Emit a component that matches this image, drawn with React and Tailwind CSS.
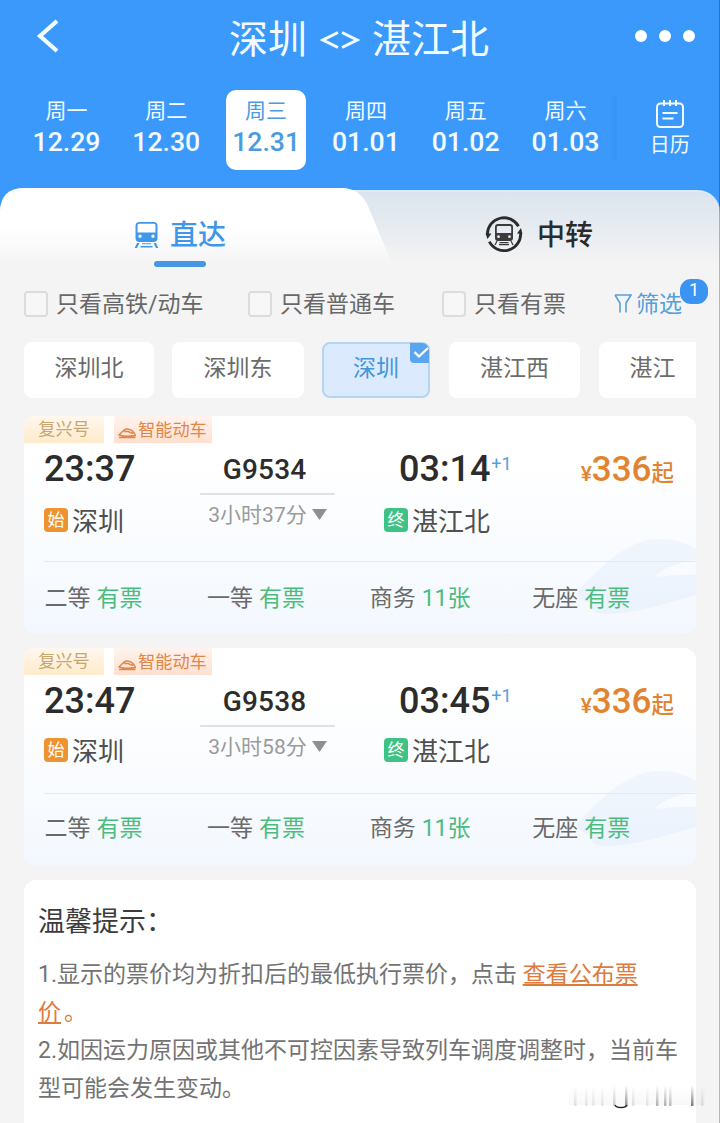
import React from 'react'

const days = [
  { week: '周一', date: '12.29' },
  { week: '周二', date: '12.30' },
  { week: '周三', date: '12.31', active: true },
  { week: '周四', date: '01.01' },
  { week: '周五', date: '01.02' },
  { week: '周六', date: '01.03' }
]

const stations = [
  { name: '深圳北', width: 'w-[130px]' },
  { name: '深圳东', width: 'w-[132px] ml-[18px]' },
  { name: '深圳', width: 'w-[108px] ml-[18px]', active: true },
  { name: '湛江西', width: 'w-[131px] ml-[19px]' },
  { name: '湛江', width: 'w-[107px] ml-[19px]' }
]

const trains = [
  { no: 'G9534', depart: '23:37', arrive: '03:14', duration: '3小时37分', stopHeight: 'h-[52px]', seatPad: 'pt-[19px]' },
  { no: 'G9538', depart: '23:47', arrive: '03:45', duration: '3小时58分', stopHeight: 'h-[48px]', seatPad: 'pt-[17px]' }
]

const seats = [
  { name: '二等', left: '有票' },
  { name: '一等', left: '有票' },
  { name: '商务', left: '11张' },
  { name: '无座', left: '有票' }
]

function TrainIcon({ className }) {
  return (
    <svg viewBox="0 0 24 28" className={className} fill="currentColor">
      <path
        fillRule="evenodd"
        d="M5 1h14a4 4 0 0 1 4 4v12a4 4 0 0 1-4 4H5a4 4 0 0 1-4-4V5a4 4 0 0 1 4-4zm-.5 1.800a1.500 1.500 0 0 0-1.500 1.500v7.200h18V4.300a1.500 1.500 0 0 0-1.500-1.500zM5.500 13.500a1.700 1.700 0 1 0 0 3.400 1.700 1.700 0 0 0 0-3.400zm13 0a1.700 1.700 0 1 0 0 3.400 1.700 1.700 0 0 0 0-3.400z"
      />
      <path d="M2.500 22H5l-2.500 5H.2zM21.500 22H19l2.500 5h2.300zM7.500 22.300h9v1h-9zM6 25h12v1.500H6z" />
    </svg>
  )
}

function TransferIcon() {
  return (
    <svg viewBox="0 0 38 38" className="w-[38px] h-[38px]" fill="none">
      <path d="M2.400 19A16.600 16.600 0 0 1 33.500 11.300" stroke="#2b2b2b" strokeWidth="2.800" />
      <path d="M35.600 18A16.600 16.600 0 0 1 4.300 26.700" stroke="#2b2b2b" strokeWidth="2.800" />
      <path d="M.5 18.500h6L2.500 24zM37.500 19l-5.500-.5 4-5.500z" fill="#2b2b2b" />
      <path
        fillRule="evenodd"
        d="M13 9h12a3 3 0 0 1 3 3v11a3 3 0 0 1-3 3H13a3 3 0 0 1-3-3V12a3 3 0 0 1 3-3zm0 2a1.200 1.200 0 0 0-1.200 1.200V18h14.400v-5.800A1.200 1.200 0 0 0 25 11zm.5 9.300a1.400 1.400 0 1 0 0 2.800 1.400 1.400 0 0 0 0-2.800zm11 0a1.400 1.400 0 1 0 0 2.800 1.400 1.400 0 0 0 0-2.800z"
        fill="#3a3a3a"
      />
      <path d="M12 26l-2 4M26 26l2 4M14.500 27.600h9M14 29.600h10" stroke="#3a3a3a" strokeWidth="1.200" />
    </svg>
  )
}

function Header() {
  return (
    <div className="h-[190px] bg-[#3b99fc] text-[#f3fdff]">
      <div className="h-[78px] flex items-center justify-between pl-[36px] pr-[25px]">
        <svg viewBox="0 0 24 34" className="w-6 h-[34px] mt-[-6px]" fill="none">
          <path d="M21 2L4 17l17 15" stroke="currentColor" strokeWidth="4.200" />
        </svg>
        <div className="w-[260px] ml-[23px] text-[39px] leading-[48px] mt-[2px] whitespace-nowrap flex justify-between">
          <span>深圳</span>
          <svg viewBox="0 0 40 20" className="w-10 h-5 mt-[14px]" fill="none" stroke="currentColor" strokeWidth="3">
            <path d="M18 2.500L3 10l15 7.500M22 2.500L37 10l-15 7.500" />
          </svg>
          <span>湛江北</span>
        </div>
        <div className="flex gap-3 mt-[-6px]">
          <span className="w-3 h-3 rounded-full bg-white" />
          <span className="w-3 h-3 rounded-full bg-white" />
          <span className="w-3 h-3 rounded-full bg-white" />
        </div>
      </div>
      <div className="flex pl-[26px] pt-3">
        {days.map((day) => (
          <div
            key={day.date}
            className={`w-20 h-20 mr-[19.800px] shrink-0 rounded-[10px] text-center pt-[7px] pl-px ${day.active ? 'bg-white text-[#4a9be0]' : ''}`}
          >
            <p className="text-[21px] leading-[28px]">{day.week}</p>
            <p className="text-[26.600px] leading-[34px] font-medium">{day.date}</p>
          </div>
        ))}
        <div className="flex-1 h-16 mt-[6px] bg-gradient-to-r from-[#3b99fc] via-[#3793f6] via-[5%] to-[#3b99fc] to-[6%] -ml-[15px]">
          <div className="w-[120px] pt-[3px] flex flex-col items-center">
            <svg viewBox="0 0 30 30" className="w-[30px] h-[30px]" fill="none" stroke="currentColor" strokeWidth="2">
              <rect x="2" y="4.500" width="26" height="23.500" rx="3.500" />
              <path d="M9 1v6M15 1v6M21 1v6M7.500 14h15M7.500 19.500h11" />
            </svg>
            <p className="text-[20px] leading-[32px]">日历</p>
          </div>
        </div>
      </div>
    </div>
  )
}

function Tabs() {
  return (
    <div className="relative h-[78px] -mt-[2px] bg-[#3b99fc]">
      <div className="absolute inset-x-0 top-[2px] bottom-0 rounded-t-[22px] border-t-2 border-[#d8edff] bg-gradient-to-b from-[#dbe4ee] to-[#f4f4f4]" />
      <svg viewBox="0 0 400 78" className="absolute left-0 top-0 w-[400px] h-[78px]">
        <defs>
          <linearGradient id="tab" x1="0" y1="0" x2="0" y2="1">
            <stop offset="0.5" stopColor="#ffffff" />
            <stop offset="1" stopColor="#f4f4f4" />
          </linearGradient>
        </defs>
        <path d="M0 78V23Q1 0 24 0H342Q360 0 368 18L393 78Z" fill="url(#tab)" />
      </svg>
      <div className="relative flex h-full">
        <div className="w-[360px] flex justify-center">
          <div className="flex h-[92px] items-center gap-[11px] text-[28px] font-medium text-[#3f97ea]">
            <TrainIcon className="w-[25px] h-7 mt-[2px]" />
            <span className="mt-[3px]">直达</span>
          </div>
        </div>
        <div className="w-[360px] flex justify-center">
          <div className="flex h-[92px] items-center gap-[14px] text-[28px] font-medium text-[#2b2b2b] -ml-[2px]">
            <TransferIcon />
            <span className="mt-[3px]">中转</span>
          </div>
        </div>
      </div>
      <span className="absolute left-[154px] top-[73px] w-[52px] h-[6px] rounded-sm bg-[#4596e6]" />
    </div>
  )
}

function CheckItem({ label, className }) {
  return (
    <div className={`flex items-center gap-2 ${className}`}>
      <span className="w-6 h-[26px] rounded-[4px] border-2 border-[#dcdcdc] bg-[#f7f7f7]" />
      <span className="mt-[2px]">{label}</span>
    </div>
  )
}

function Filters() {
  return (
    <div className="h-[76px] flex items-center pl-6 text-[23px] text-[#686868] whitespace-nowrap">
      <CheckItem label="只看高铁/动车" className="w-[224px]" />
      <CheckItem label="只看普通车" className="w-[194px]" />
      <CheckItem label="只看有票" className="w-[172px]" />
      <div className="relative flex items-center gap-[4px] text-[#559fdc]">
        <svg viewBox="0 0 18 20" className="w-[18px] h-5" fill="none" stroke="currentColor" strokeWidth="1.600">
          <path d="M1 1h16l-5 8v9.500M1 1l5 8v9.500" />
        </svg>
        <span className="mt-[2px]">筛选</span>
        <span className="absolute left-[66px] top-[-7px] w-7 h-[25px] rounded-[11px] bg-[#3b93f2] text-white text-[18px] leading-[22px] text-center">
          1
        </span>
      </div>
    </div>
  )
}

function StationChips() {
  return (
    <div className="mx-6 flex overflow-hidden text-[23px] text-[#6b6b6b]">
      {stations.map((station) => (
        <div
          key={station.name}
          className={`relative shrink-0 h-[56px] rounded-lg flex items-center justify-center pb-[2px] ${station.width} ${station.active ? 'bg-[#dbebfd] border-2 border-[#b5d3f3] text-[#4496dc]' : 'bg-white'}`}
        >
          {station.name}
          {station.active && (
            <span className="absolute right-[-1px] top-[-1px] w-[19px] h-5 rounded-tr-[7px] rounded-bl-[4px] bg-[#5ba5f0]">
              <svg viewBox="0 0 19 20" className="w-[19px] h-5" fill="none">
                <path d="M4.500 9l4.500 4.500 9-8.500" stroke="#fff" strokeWidth="2.200" />
              </svg>
            </span>
          )}
        </div>
      ))}
    </div>
  )
}

function TrainCard({ train }) {
  return (
    <div className="relative h-[218px] rounded-xl overflow-hidden bg-gradient-to-b from-white from-[20%] to-[#f3f8fe]">
      {/* bullet train watermark */}
      <svg viewBox="0 0 120 84" className="absolute right-0 top-[119px] w-[120px] h-[84px]">
        <defs>
          <linearGradient id="train" x1="0" y1="0" x2="0" y2="1">
            <stop offset="0" stopColor="#f1f6fd" />
            <stop offset="1" stopColor="#eaf2fc" />
          </linearGradient>
        </defs>
        <path
          d="M2 56C30 26 54 4 84 4c14 0 27 4 36 10v11c-18 2-34 9-42 17 14-1 28-3 42-2v20C92 68 60 78 32 79c-14 0-18-4-15-10-10-3-18-7-15-13z"
          fill="url(#train)"
        />
      </svg>
      <div className="relative">
        <div className="flex gap-[10px] h-[27px] text-[17.200px] leading-[27px]">
          <span className="w-20 text-center bg-gradient-to-b from-[#fff7ee] to-[#ffebcb] text-[#c8a66c]">复兴号</span>
          <span className="w-[98px] flex items-center pl-[4px] gap-[2px] bg-gradient-to-b from-[#fff3ee] to-[#ffe0d0] text-[#e08748]">
            <svg viewBox="0 0 18 12" className="w-[18px] h-3 mt-[7px] shrink-0" fill="none" stroke="currentColor" strokeWidth="1.400">
              <path d="M1 8C4 5 6 2 9 2c4 0 7 3 8.500 6.500-6 1-12 1-16.500-.5zM6 4.500h4l5 2M1 10.500h16.500" />
            </svg>
            <span className="mt-[2px]">智能动车</span>
          </span>
        </div>
        <div className="flex h-[53px] pl-5 text-[#2c2c2c] font-medium whitespace-nowrap">
          <div className="w-[153px] text-[36px] leading-[53px]">{train.depart}</div>
          <div className="w-[135px] text-center text-[28px] leading-[54px] tracking-[0.200px]">{train.no}</div>
          <div className="flex w-[183px] pl-[67px]">
            <span className="text-[36px] leading-[53px]">{train.arrive}</span>
            <span className="text-[18px] leading-[42px] pl-px font-normal text-[#559fdc]">+1</span>
          </div>
          <div className="flex-1 text-right pr-[22px] text-[#e18431] leading-[54px]">
            <span className="text-[21px]">¥</span>
            <span className="text-[35px]">336</span>
            <span className="text-[22.500px]">起</span>
          </div>
        </div>
        <div className="flex h-[65px] pl-5 text-[26px] text-[#4f4f4f]">
          <div className={`flex items-center w-[156px] gap-1 ${train.stopHeight}`}>
            <span className="w-6 h-6 mt-[-4px] rounded-[4px] bg-[#ed9330] text-white text-[17px] leading-6 text-center">始</span>
            深圳
          </div>
          <div className="w-[135px] h-[40px] flex items-center justify-center gap-[5px] text-[21px] text-[#9a9a9a] relative">
            <span className="absolute left-0 right-0 top-[-3px] h-[2px] bg-[#dfe1e4] rounded" />
            {train.duration}
            <svg viewBox="0 0 15 11" className="w-[15px] h-[11px] mt-[-4px]">
              <path d="M0 0h15L7.500 11z" fill="#8f8f8f" />
            </svg>
          </div>
          <div className={`flex items-center pl-[49px] gap-1 ${train.stopHeight}`}>
            <span className="w-6 h-6 mt-[-4px] rounded-[4px] bg-[#3fc285] text-white text-[17px] leading-6 text-center">终</span>
            湛江北
          </div>
        </div>
        <div className="ml-5 border-t border-[#e4eaf1]" />
        <div className={`flex pl-[20.500px] text-[23px] leading-[36px] text-[#6a6a6a] whitespace-nowrap ${train.seatPad}`}>
          {seats.map((seat) => (
            <div key={seat.name} className="w-[162.600px] shrink-0 flex gap-[6px]">
              {seat.name}
              <span className="text-[#4cbc7e]">{seat.left}</span>
            </div>
          ))}
        </div>
      </div>
    </div>
  )
}

function Notice() {
  return (
    <div className="flex-1 rounded-t-xl bg-white px-[14px] pt-[22px]">
      <h3 className="text-[27px] leading-10 text-[#3c3c3c]">温馨提示：</h3>
      <div className="mt-[14px] text-[23px] leading-[38px] text-[#737373] whitespace-nowrap">
        <p>
          1.显示的票价均为折扣后的最低执行票价，点击{' '}
          <span className="text-[#de7b3d] underline underline-offset-[2px] decoration-2">查看公布票</span>
          <br />
          <span className="text-[#de7b3d] underline underline-offset-[2px] decoration-2">价</span>
          <span className="text-[#de7b3d] pl-[3px]">。</span>
        </p>
        <p>
          2.如因运力原因或其他不可控因素导致列车调度调整时，当前车
          <br />
          型可能会发生变动。
        </p>
      </div>
    </div>
  )
}

function FadedMark() {
  const bars = [
    [7, 0.14], [18, 0.12], [25, 0.1], [34, 0.12], [46, 0.25], [58, 0.6], [65, 0.15],
    [79, 0.12], [89, 0.4], [97, 0.4], [102, 0.35], [124, 0.7], [134, 0.12]
  ]
  return (
    <svg viewBox="0 0 140 26" className="absolute left-[567px] top-[1084px] w-[140px] h-[26px]">
      <defs>
        <linearGradient id="fade" x1="0" y1="0" x2="0" y2="1">
          <stop offset="0" stopColor="#555" stopOpacity="0" />
          <stop offset="1" stopColor="#444" />
        </linearGradient>
      </defs>
      <rect x="2" y="2" width="136" height="19" fill="url(#fade)" opacity="0.04" />
      {bars.map(([x, opacity]) => (
        <rect key={x} x={x} y="1" width="2.500" height="21" fill="url(#fade)" opacity={opacity} />
      ))}
      <path d="M48 21q1 2.500 6 2.500t6-2.500" fill="none" stroke="#222" strokeWidth="1.500" />
    </svg>
  )
}

function App() {
  return (
    <div className="relative w-[720px] h-[1123px] overflow-hidden flex flex-col bg-[#f4f4f4] font-['Roboto','Noto_Sans_CJK_SC',sans-serif]">
      <Header />
      <Tabs />
      <Filters />
      <StationChips />
      <div className="flex-1 flex flex-col px-6 pt-[18px] gap-[14px]">
        {trains.map((train) => (
          <TrainCard key={train.no} train={train} />
        ))}
        <Notice />
      </div>
      <FadedMark />
      <span className="absolute right-0 inset-y-0 w-px bg-black/25" />
    </div>
  )
}

export default App
